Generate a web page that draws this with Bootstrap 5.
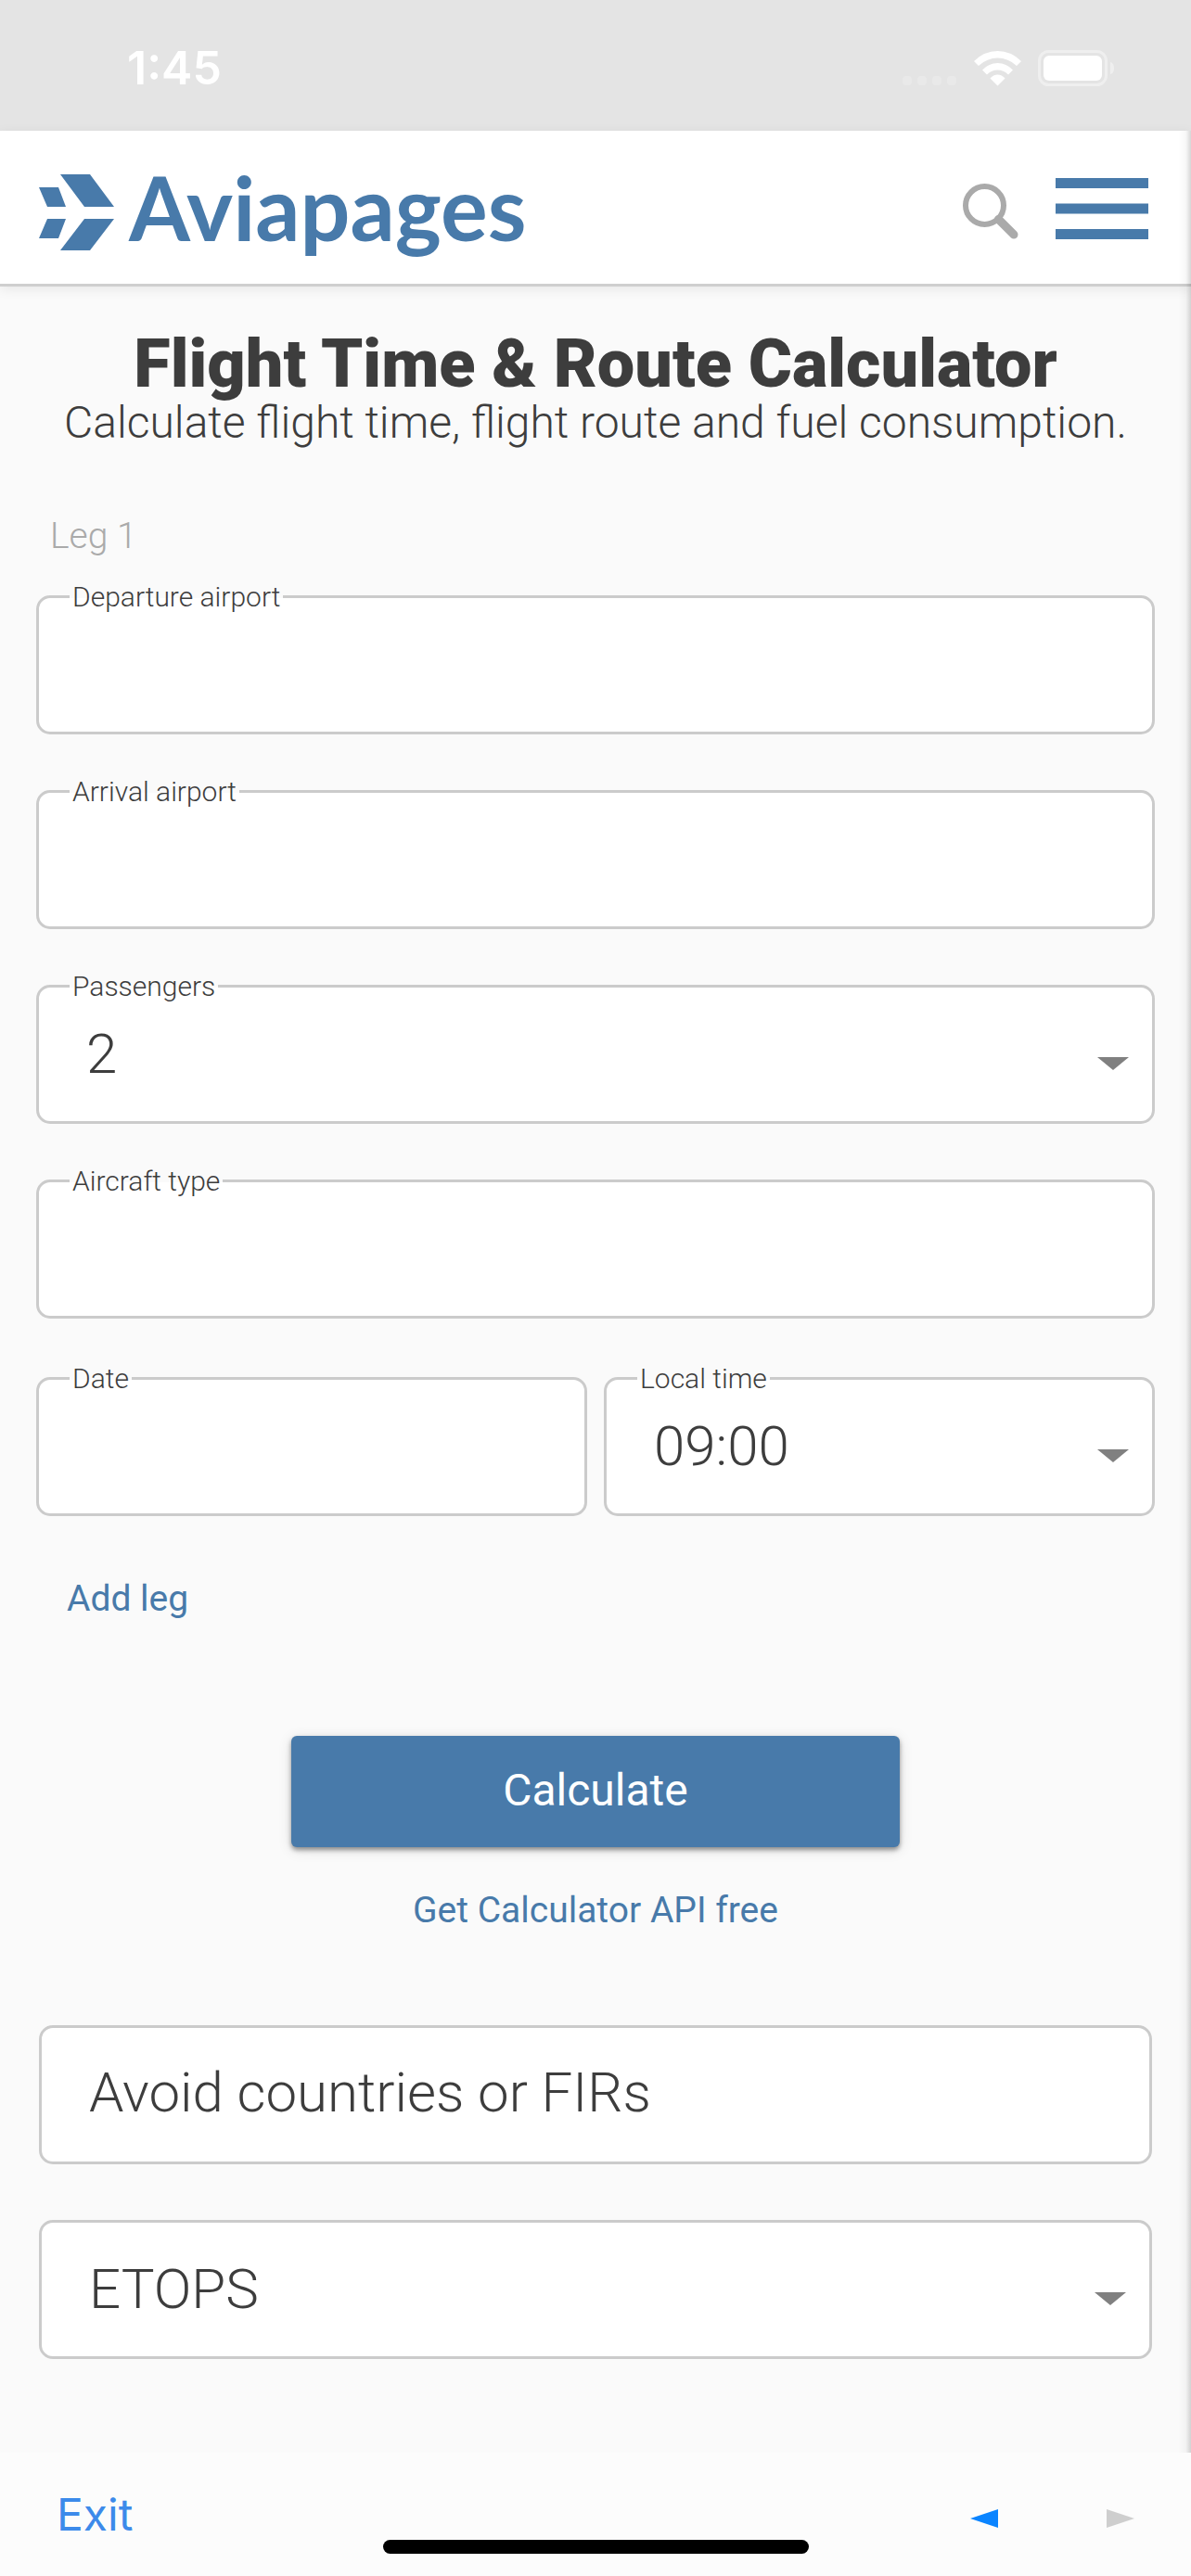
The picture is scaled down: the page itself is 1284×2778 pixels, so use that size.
<!DOCTYPE html>
<html lang="en">
<head>
<meta charset="utf-8">
<meta name="viewport" content="width=device-width, initial-scale=1">
<title>Flight Time &amp; Route Calculator</title>
<link href="https://cdn.jsdelivr.net/npm/bootstrap@5.3.0/dist/css/bootstrap.min.css" rel="stylesheet">
<style>
:root { --brand: #487aaa; --ink: #3d3d3d; --page: #fafafa; --line: #cbcbcb; }
body { font-family: Roboto, "Liberation Sans", sans-serif; font-weight: 300; color: var(--ink); background: var(--page); }
a { color: var(--brand); text-decoration: none; }

.status-bar { background: #e4e4e4; color: #fff; padding: 43px 82px 38px 137px; font: 600 50px/60px Inter, sans-serif; }
.status-icons { gap: 18px; }

.site-header { background: #fff; border-bottom: 3px solid #cfcfcf; box-shadow: 0 3px 12px rgba(0,0,0,.08); padding: 24px 46px 21px 42px; }
.brand-mark { margin-top: 8px; }
.brand-name { font: 700 95px/116px Lato, sans-serif; color: var(--brand); padding-bottom: 4px; }
.header-tools { gap: 40px; }
.header-tools .btn { line-height: 1; }

.page-shell { position: relative; }
.drawer-edge { position: absolute; top: 0; right: 0; bottom: 0; width: 14px; pointer-events: none; background: linear-gradient(to right, transparent, rgba(0,0,0,.03) 60%, rgba(0,0,0,.16)); }
.page-main { padding: 48px 39px 60px; }
.page-title { font-size: 72px; line-height: 72px; font-weight: 900; }
.page-intro { font-size: 48px; line-height: 54px; margin-bottom: 71px; }
.leg-title { font-size: 39px; line-height: 48px; font-weight: 300; color: #aaa; padding-left: 15px; margin-bottom: 40px; }

.field { position: relative; margin-bottom: 60px; }
.field .form-control, .field .form-select {
  font-size: 60px; line-height: 72px; font-weight: 300; color: var(--ink);
  height: auto; padding: 36px 90px 36px 51px; border: 3px solid var(--line); border-radius: 15px; background-color: #fff;
}
.field .form-control { padding: 34px 51px 38px; }
.field .form-control::placeholder { color: var(--ink); opacity: 1; }
.field .form-select {
  background-image: url("data:image/svg+xml,%3Csvg xmlns='http://www.w3.org/2000/svg' viewBox='0 0 34 14'%3E%3Cpath fill='%23808080' d='M0 0h34L17 14z'/%3E%3C/svg%3E");
  background-size: 34px 14px; background-position: right 25px top 75px;
}
.field label { position: absolute; left: 36px; top: -13px; padding: 0 3px; font-size: 30px; line-height: 30px; background: linear-gradient(var(--page) 16px, #fff 16px); }
.field-pair { --bs-gutter-x: 18px; padding-top: 3px; }
.options { padding: 0 3px; margin-top: 100px; }

.text-action { font-size: 39px; line-height: 48px; font-weight: 400; }
.add-leg { padding-left: 33px; margin: 5px 0 124px; }
.btn-calc { width: 656px; max-width: 100%; padding: 30px 24px 32px; margin-bottom: 44px; border: 0; border-radius: 6px; font-size: 48px; line-height: 58px; font-weight: 400; color: #fff; background: var(--brand); box-shadow: 0 3px 5px rgba(0,0,0,.4), 0 3px 15px rgba(0,0,0,.12); }

.browser-bar { background: #fcfcfc; padding: 40px 61px 24px; }
.exit-link { font: 400 48px/54px Inter, sans-serif; color: #3c8aea; }
.history-nav { gap: 117px; padding-top: 8px; }
.home-bar { width: 459px; height: 15px; border-radius: 8px; background: #000; }
</style>
</head>
<body>
<div class="d-flex flex-column min-vh-100">
  <div class="status-bar d-flex justify-content-between align-items-center">
    <span>1:45</span>
    <div class="status-icons d-flex align-items-center">
      <svg width="59" height="39" viewBox="0 0 59 39" fill="#e9e9e9" aria-hidden="true">
        <rect y="28" width="10" height="10" rx="4"/><rect x="16" y="28" width="10" height="10" rx="4"/><rect x="32" y="28" width="10" height="10" rx="4"/><rect x="48" y="28" width="10" height="10" rx="4"/>
      </svg>
      <svg width="51" height="39" viewBox="0 0 51 39" fill="#fff" aria-label="Wi-Fi">
        <path d="M0 12Q11 1 25.500 1T51 12L46 17Q37 8.500 25.500 8.500T5 17z"/>
        <path d="M9 21.500Q16 14 25.500 14T42 21.500L37 26.500Q32 21.500 25.500 21.500T14 26.500z"/>
        <path d="M17.500 30.500Q21 26.500 25.500 26.500T33.500 30.500L25.500 38.500z"/>
      </svg>
      <svg width="83" height="39" viewBox="0 0 83 39" aria-label="Battery">
        <rect x="1.500" y="1.500" width="72" height="36" rx="10" fill="none" stroke="#efefef" stroke-width="3"/>
        <rect x="6" y="6" width="63" height="27" rx="6" fill="#fff"/>
        <path d="M78 13q4 1 4 6.500t-4 6.500z" fill="#efefef"/>
      </svg>
    </div>
  </div>

  <div class="page-shell flex-grow-1">
    <header class="site-header d-flex justify-content-between align-items-center">
      <a href="#" class="d-flex align-items-center gap-3">
        <svg class="brand-mark" width="81" height="82" viewBox="0 0 81 82" fill="#487aaa" aria-hidden="true">
          <path d="M23 0H55L81 35H49zM0 14H21L29 35H9zM9 48H29L21 69H0zM49 48H81L55 82H23z"/>
        </svg>
        <span class="brand-name">Aviapages</span>
      </a>
      <div class="header-tools d-flex align-items-center">
        <button type="button" class="btn p-0 border-0" aria-label="Search">
          <svg width="60" height="70" viewBox="0 0 60 70" fill="none" stroke="#aaa">
            <circle cx="23.500" cy="31.500" r="20.500" stroke-width="6"/>
            <path d="M38.500 46.500L55 63" stroke-width="9" stroke-linecap="round"/>
          </svg>
        </button>
        <button type="button" class="btn p-0 border-0" aria-label="Menu">
          <svg width="100" height="66" viewBox="0 0 100 66" fill="#487aaa">
            <rect width="100" height="11"/><rect y="27.500" width="100" height="11"/><rect y="55" width="100" height="11"/>
          </svg>
        </button>
      </div>
    </header>

    <main class="page-main">
      <h1 class="page-title text-center mb-0">Flight Time &amp; Route Calculator</h1>
      <p class="page-intro text-center">Calculate flight time, flight route and fuel consumption.</p>

      <form>
        <h2 class="leg-title">Leg 1</h2>
        <div class="field"><input class="form-control" type="text" id="departure"><label for="departure">Departure airport</label></div>
        <div class="field"><input class="form-control" type="text" id="arrival"><label for="arrival">Arrival airport</label></div>
        <div class="field">
          <select class="form-select" id="passengers"><option>1</option><option selected>2</option><option>3</option><option>4</option></select>
          <label for="passengers">Passengers</label>
        </div>
        <div class="field"><input class="form-control" type="text" id="aircraft"><label for="aircraft">Aircraft type</label></div>
        <div class="row field-pair">
          <div class="col-6"><div class="field"><input class="form-control" type="text" id="date"><label for="date">Date</label></div></div>
          <div class="col-6"><div class="field">
            <select class="form-select" id="time"><option>08:00</option><option selected>09:00</option><option>10:00</option></select>
            <label for="time">Local time</label>
          </div></div>
        </div>

        <div class="add-leg"><a href="#" class="text-action d-inline-block">Add leg</a></div>

        <div class="d-flex flex-column align-items-center">
          <button type="submit" class="btn btn-calc">Calculate</button>
          <a href="#" class="text-action">Get Calculator API free</a>
        </div>

        <div class="options">
          <div class="field"><input class="form-control" type="text" placeholder="Avoid countries or FIRs" aria-label="Avoid countries or FIRs"></div>
          <div class="field mb-0"><select class="form-select" aria-label="ETOPS"><option selected>ETOPS</option><option>60</option><option>120</option><option>180</option></select></div>
        </div>
      </form>
    </main>
    <div class="drawer-edge"></div>
  </div>

  <footer class="browser-bar d-flex flex-column align-items-center">
    <div class="d-flex justify-content-between align-items-center w-100">
      <a href="#" class="exit-link">Exit</a>
      <div class="history-nav d-flex">
        <button type="button" class="btn p-0 border-0 d-flex" aria-label="Back"><svg width="30" height="20" viewBox="0 0 30 20"><path d="M30 0v20L0 10z" fill="#0a84ff"/></svg></button>
        <button type="button" class="btn p-0 border-0 d-flex" aria-label="Forward" disabled><svg width="30" height="20" viewBox="0 0 30 20"><path d="M0 0v20L30 10z" fill="#b7b7b7"/></svg></button>
      </div>
    </div>
    <div class="home-bar"></div>
  </footer>
</div>
<script src="https://cdn.jsdelivr.net/npm/bootstrap@5.3.0/dist/js/bootstrap.bundle.min.js"></script>
</body>
</html>
